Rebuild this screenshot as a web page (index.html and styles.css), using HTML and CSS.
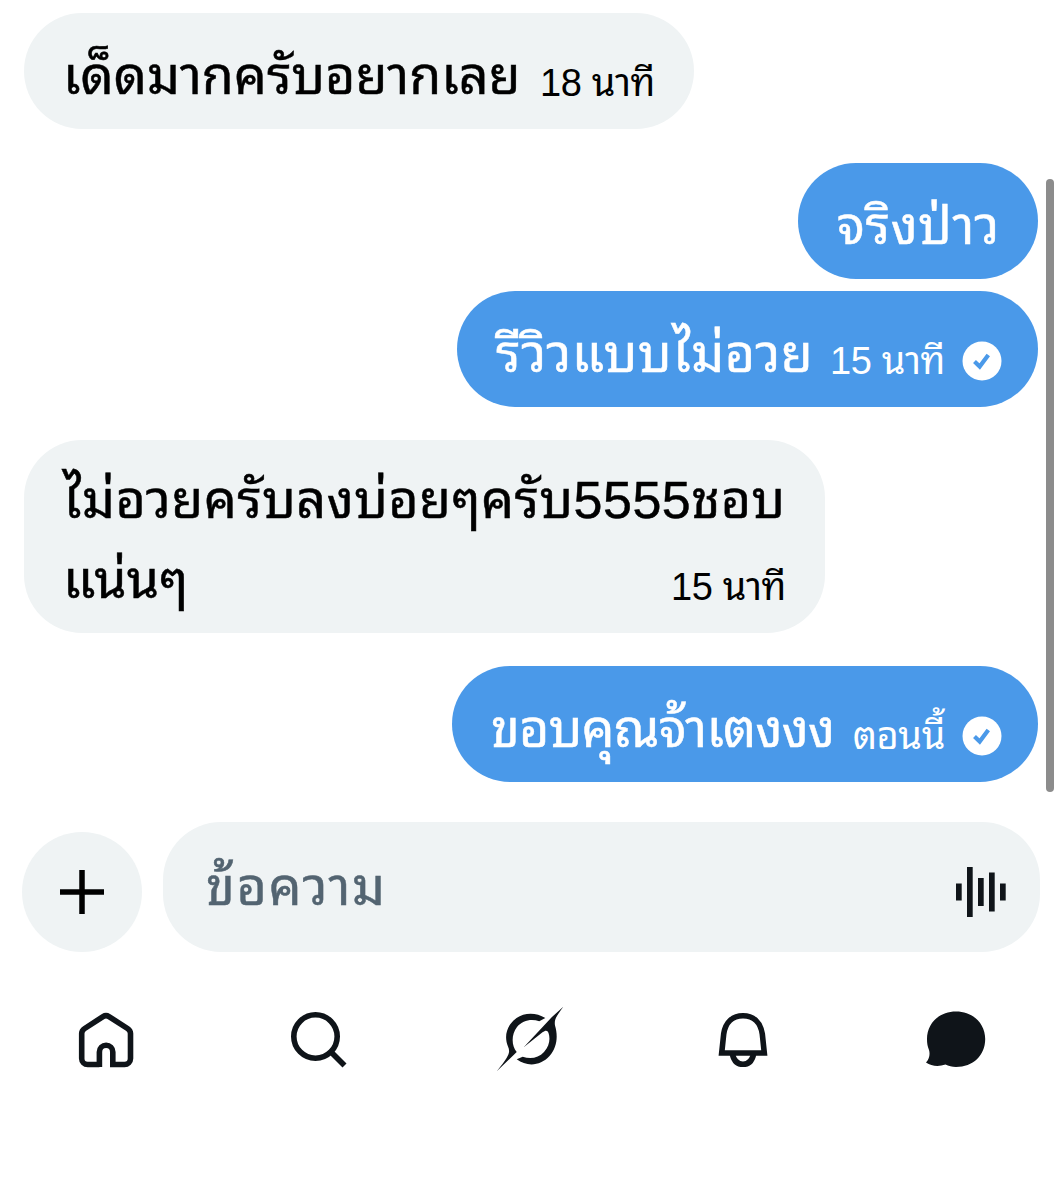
FILE: index.html
```
<!DOCTYPE html>
<html lang="th">

<head>
  <meta charset="UTF-8">
  <meta name="viewport" content="width=device-width, initial-scale=1.0">
  <title>ข้อความ</title>
  <link rel="stylesheet" href="styles.css">
</head>

<body>
  <main class="chat">
    <div class="bubble received first">
      <span class="text">เด็ดมากครับอยากเลย</span>
      <span class="time">18 นาที</span>
    </div>

    <div class="bubble sent question">
      <span class="text">จริงป่าว</span>
    </div>

    <div class="bubble sent review">
      <span class="text">รีวิวแบบไม่อวย</span>
      <span class="time">15 นาที</span>
      <svg class="check" viewBox="0 0 40 40">
        <circle cx="20" cy="20" r="19.500" fill="#fff" />
        <path d="M12.500 20.500l5.200 5 8.600-11.500" fill="none" stroke="#4a99e9" stroke-width="4.200" />
      </svg>
    </div>

    <div class="bubble received long">
      <span class="text">ไม่อวยครับลงบ่อยๆครับ5555ชอบ</span>
      <div class="last-line">
        <span class="text">แน่นๆ</span>
        <span class="time">15 นาที</span>
      </div>
    </div>

    <div class="bubble sent thanks">
      <span class="text">ขอบคุณจ้าเตงงง</span>
      <span class="time">ตอนนี้</span>
      <svg class="check" viewBox="0 0 40 40">
        <circle cx="20" cy="20" r="19.500" fill="#fff" />
        <path d="M12.500 20.500l5.200 5 8.600-11.500" fill="none" stroke="#4a99e9" stroke-width="4.200" />
      </svg>
    </div>
    <div class="scrollbar"></div>
  </main>

  <div class="composer">
    <button class="add" aria-label="เพิ่ม">
      <svg width="44" height="44" viewBox="0 0 44 44">
        <path d="M22 0v44M0 22h44" stroke="#000" stroke-width="5.500" />
      </svg>
    </button>
    <div class="message-box">
      <span class="placeholder">ข้อความ</span>
      <svg width="50" height="50" viewBox="0 0 50 50" fill="#0f1419">
        <rect x="0" y="16.500" width="5.700" height="17" />
        <rect x="11" y="0" width="5.700" height="50" />
        <rect x="22" y="11" width="5.700" height="28" />
        <rect x="33" y="5.500" width="5.700" height="39" />
        <rect x="44" y="16.500" width="5.700" height="17" />
      </svg>
    </div>
  </div>

  <nav class="tabs">
    <a class="tab">
      <svg viewBox="0 0 80 80">
        <path d="M33.400 67V52a6.700 6.700 0 0 1 13.400 0V64.500H58.500A6 6 0 0 0 64.500 58.500V33.500Q64.500 30.500 61.500 28.500L43 16.600Q40 14.800 37 16.600L18.700 28.500Q15.700 30.500 15.700 33.500V58.500A6 6 0 0 0 21.700 64.500H33.400" />
      </svg>
    </a>
    <a class="tab">
      <svg viewBox="0 0 80 80">
        <circle cx="36.500" cy="36.500" r="21.700" />
        <path d="M52 52L65.500 65.500" />
      </svg>
    </a>
    <a class="tab">
      <svg viewBox="0 0 80 80">
        <path class="solid" d="M54.300 18C44 11.500 30.500 12.500 22.500 20.500C14.500 28.500 13.500 38 17 46.500C19.500 52.500 18.500 55.500 6 71L25.700 52C20.500 46 20 34.500 26 27C31.500 20.500 40 18.500 48.300 21.300Z" />
        <path class="solid" d="M32.700 47.300L60.700 17.300L72.300 6.700C65.500 16 63 19.500 64 25.500C67.500 37 65.500 48 58.500 56C49.500 66 36 67 25.700 59.300L31.700 56.700C39.500 59.500 47.500 58 53 52C58.500 46 59.500 39 57.500 33C56.500 30 54.500 30 51.500 32.200Z" />
      </svg>
    </a>
    <a class="tab">
      <svg viewBox="0 0 80 80">
        <path d="M18.700 53H61.300L59.300 34C57.500 22 50 15.800 40 15.800S22.500 22 20.700 34Z" />
        <path d="M29.500 54.500C31 61 35 64.300 40 64.300S49 61 50.500 54.500" />
      </svg>
    </a>
    <a class="tab">
      <svg viewBox="0 0 80 80">
        <path class="solid" d="M40 11.500C57 11.500 69.200 23.500 69.200 39C69.200 55.500 57 67 40 67C36 67 32.500 66 29.500 64.500C22.500 67 15.500 66.300 10 62.500C13.500 58.500 14.200 54 13 50C11.500 46.500 11 43 11 39C11 23.500 23 11.500 40 11.500Z" />
      </svg>
    </a>
  </nav>
</body>

</html>
```
FILE: styles.css
```
body {
  margin: 0;
  background: #fff;
  color: #000;
  font-family: "Liberation Sans", "Noto Sans Thai Looped", "Noto Looped Thai", Loma, Garuda, Waree, "Noto Sans Thai", sans-serif;
}

.chat {
  position: relative;
  display: flex;
  flex-direction: column;
  height: 822px;
  padding: 13px 24px 0;
  box-sizing: border-box;
}

.bubble {
  display: flex;
  align-items: center;
  box-sizing: border-box;
  height: 116px;
  padding: 10px 39px 0;
  border-radius: 58px;
  white-space: nowrap;
}

.received {
  align-self: flex-start;
  background: #eff3f4;
}

.sent {
  align-self: flex-end;
  background: #4a99e9;
  color: #fff;
}

.first {
  width: 670px;
}

.question {
  width: 240px;
  margin-top: 34px;
}

.question .text {
  letter-spacing: 0.6px;
}

.review {
  width: 581px;
  margin-top: 12px;
}

.review .text {
  letter-spacing: 0.6px;
}

.long {
  display: block;
  width: 801px;
  height: 193px;
  margin-top: 33px;
  padding-top: 20px;
}

.long > .text {
  letter-spacing: 0.5px;
}

.thanks {
  width: 586px;
  margin-top: 33px;
}

.thanks .text {
  letter-spacing: -0.8px;
}

.text {
  font-size: 52px;
  line-height: 80px;
  -webkit-text-stroke: 0.5px;
}

.time {
  margin-left: auto;
  padding-top: 14px;
  font-size: 38px;
  line-height: 60px;
  letter-spacing: -0.4px;
}

.last-line {
  display: flex;
  align-items: center;
}

.check {
  width: 40px;
  height: 40px;
  margin: 14px -3px 0 17px;
}

.scrollbar {
  position: absolute;
  top: 179px;
  right: 8px;
  width: 8px;
  height: 613px;
  border-radius: 4px;
  background: #8c8c8c;
}

.composer {
  display: flex;
  align-items: flex-end;
  gap: 21px;
  padding: 0 22px;
}

.add {
  display: flex;
  align-items: center;
  justify-content: center;
  width: 120px;
  height: 120px;
  padding: 0;
  border: none;
  border-radius: 50%;
  background: #eff3f4;
}

.message-box {
  display: flex;
  flex: 1;
  align-items: center;
  justify-content: space-between;
  height: 130px;
  box-sizing: border-box;
  padding: 9px 34px 0 43px;
  border-radius: 58px;
  background: #eff3f4;
}

.placeholder {
  padding-bottom: 10px;
  color: #536471;
  font-size: 52px;
  line-height: 80px;
  letter-spacing: 1.6px;
  -webkit-text-stroke: 0.5px;
}

.tabs {
  display: flex;
  margin-top: 48px;
}

.tab {
  display: flex;
  flex: 1;
  justify-content: center;
}

.tab svg {
  width: 80px;
  height: 80px;
  fill: none;
  stroke: #0f1419;
  stroke-width: 5.6;
}

.tab .solid {
  fill: #0f1419;
  stroke: none;
}
```
